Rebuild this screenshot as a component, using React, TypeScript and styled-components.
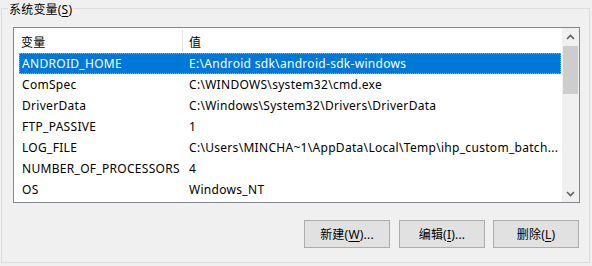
import React from "react";
import styled, { createGlobalStyle } from "styled-components";

const Global = createGlobalStyle`
  html, body { margin: 0; padding: 0; background: #f0f0f0; }
  body {
    width: 592px; height: 266px; overflow: hidden;
    font-family: "Noto Sans", "Noto Sans CJK SC", sans-serif;
    font-size: 12px; color: #000;
  }
`;

const Group = styled.fieldset`
  box-sizing: border-box;
  margin: 0 0 0 1px;
  padding: 0;
  width: 589px;
  height: 263px;
  border: 1px solid #dcdcdc;
  min-width: 0;
`;

const Legend = styled.legend`
  margin-left: 6px;
  padding: 3px 1px 0 1px;
  height: 16px;
  box-sizing: border-box;
  line-height: 13px;
  color: #000;
  letter-spacing: 0.2px;
`;

const Content = styled.div`
  padding: 0 10px 0 11px;
`;

const Key = styled.span`
  text-decoration: underline;
  text-underline-offset: 2px;
`;

const ListView = styled.div`
  margin-top: 11px;
  width: 567px;
  height: 176px;
  box-sizing: border-box;
  border: 1px solid #828790;
  background: #fff;
  display: flex;
  letter-spacing: 0.3px;
`;

const Table = styled.div`
  flex: 1;
  display: flex;
  flex-direction: column;
  overflow: hidden;
`;

const Header = styled.div`
  display: flex;
  height: 25px;
  align-items: stretch;
  flex-shrink: 0;
`;

const HeadCell = styled.div<{ $w?: number; $pl: number; $divider?: boolean }>`
  ${(p) => (p.$w ? `width: ${p.$w}px;` : "flex: 1;")}
  padding-left: ${(p) => p.$pl}px;
  box-sizing: border-box;
  display: flex;
  align-items: center;
  padding-top: 1px;
  border-right: ${(p) => (p.$divider ? "1px solid #e5e5e5" : "none")};
  margin: 2px 0 0 0;
`;

const Row = styled.div<{ $selected?: boolean }>`
  display: flex;
  align-items: center;
  height: 21px;
  margin-left: 5px;
  width: 542px;
  box-sizing: border-box;
  padding-left: 2px;
  flex-shrink: 0;
  white-space: nowrap;
  background: ${(p) => (p.$selected ? "#0078d7" : "transparent")};
  color: ${(p) => (p.$selected ? "#fff" : "#000")};
  border: 1px ${(p) => (p.$selected ? "dotted #f0a040" : "solid transparent")};
`;

const NameCell = styled.div`
  width: 167px;
  flex-shrink: 0;
  overflow: hidden;
`;

const ValueCell = styled.div`
  flex: 1;
  overflow: hidden;
`;

const ScrollBar = styled.div`
  width: 17px;
  background: #f0f0f0;
  display: flex;
  flex-direction: column;
  flex-shrink: 0;
`;

const Arrow = styled.div`
  height: 17px;
  display: flex;
  align-items: center;
  justify-content: center;
  flex-shrink: 0;
`;

const Track = styled.div`
  flex: 1;
  padding: 1px 1px 0 1px;
`;

const Thumb = styled.div`
  height: 48px;
  background: #cdcdcd;
`;

const Buttons = styled.div`
  display: flex;
  justify-content: flex-end;
  gap: 8px;
  width: 566px;
  margin-top: 17px;
`;

const Button = styled.button`
  width: 86px;
  height: 28px;
  box-sizing: border-box;
  border: 1px solid #adadad;
  background: #e1e1e1;
  font-family: "Noto Sans", "Noto Sans CJK SC", sans-serif;
  font-size: 12px;
  letter-spacing: 0.2px;
  color: #000;
  padding: 0;
  display: flex;
  align-items: center;
  justify-content: center;
  &:first-child { margin-right: 1px; }
`;

const Chevron = ({ up }: { up?: boolean }) => (
  <svg width="9" height="6" viewBox="0 0 9 6">
    <path
      d={up ? "M1 5 L4.5 1.5 L8 5" : "M1 1 L4.5 4.5 L8 1"}
      fill="none"
      stroke="#606060"
      strokeWidth="1.6"
    />
  </svg>
);

const rows: [string, string][] = [
  ["ANDROID_HOME", "E:\\Android sdk\\android-sdk-windows"],
  ["ComSpec", "C:\\WINDOWS\\system32\\cmd.exe"],
  ["DriverData", "C:\\Windows\\System32\\Drivers\\DriverData"],
  ["FTP_PASSIVE", "1"],
  ["LOG_FILE", "C:\\Users\\MINCHA~1\\AppData\\Local\\Temp\\ihp_custom_batch..."],
  ["NUMBER_OF_PROCESSORS", "4"],
  ["OS", "Windows_NT"],
];

export default function App() {
  return (
    <>
      <Global />
      <Group>
        <Legend>
          系统变量(<Key>S</Key>)
        </Legend>
        <Content>
          <ListView>
            <Table>
              <Header>
                <HeadCell $w={169} $pl={7} $divider>
                  变量
                </HeadCell>
                <HeadCell $pl={6}>值</HeadCell>
              </Header>
              {rows.map(([k, v], i) => (
                <Row key={k} $selected={i === 0}>
                  <NameCell>{k}</NameCell>
                  <ValueCell>{v}</ValueCell>
                </Row>
              ))}
            </Table>
            <ScrollBar>
              <Arrow>
                <Chevron up />
              </Arrow>
              <Track>
                <Thumb />
              </Track>
              <Arrow>
                <Chevron />
              </Arrow>
            </ScrollBar>
          </ListView>
          <Buttons>
            <Button>
              新建(<Key>W</Key>)...
            </Button>
            <Button>
              编辑(<Key>I</Key>)...
            </Button>
            <Button>
              删除(<Key>L</Key>)
            </Button>
          </Buttons>
        </Content>
      </Group>
    </>
  );
}
